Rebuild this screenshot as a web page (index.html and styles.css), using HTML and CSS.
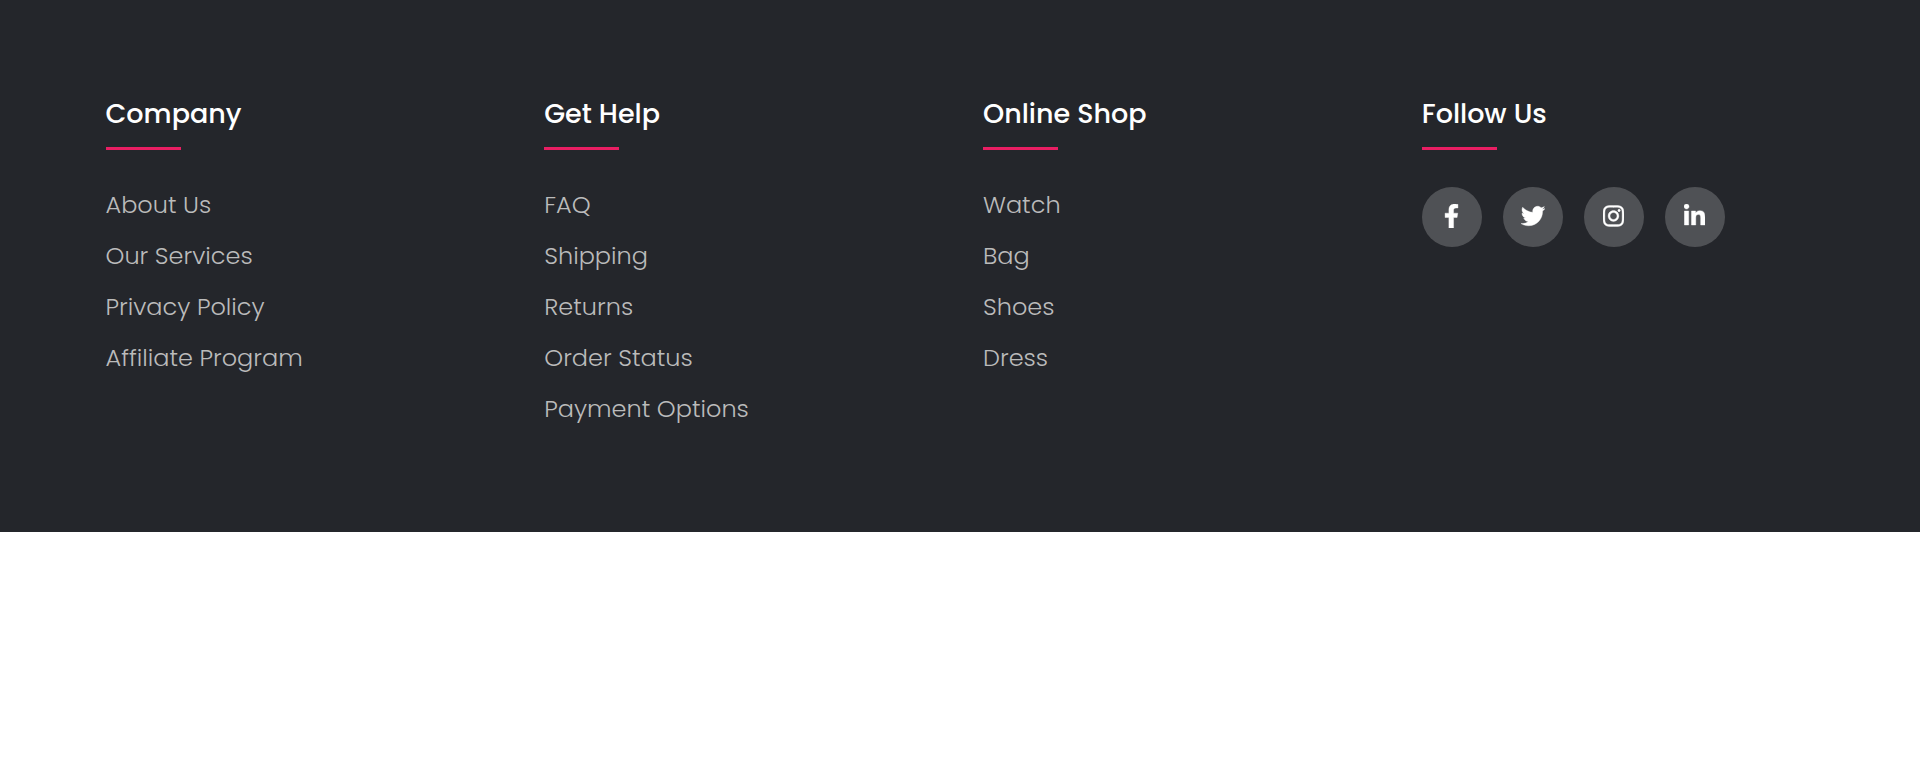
FILE: index.html
```html
<!DOCTYPE html>
<html lang="en">
<head>
<meta charset="utf-8">
<meta name="viewport" content="width=device-width, initial-scale=1">
<title>Footer</title>
<link rel="stylesheet" href="styles.css">
</head>
<body>
<footer class="footer">
  <div class="container">
    <section class="footer-col">
      <h4 class="footer-title">Company</h4>
      <ul class="footer-links">
        <li><a href="#">About Us</a></li>
        <li><a href="#">Our Services</a></li>
        <li><a href="#">Privacy Policy</a></li>
        <li><a href="#">Affiliate Program</a></li>
      </ul>
    </section>
    <section class="footer-col">
      <h4 class="footer-title">Get Help</h4>
      <ul class="footer-links">
        <li><a href="#">FAQ</a></li>
        <li><a href="#">Shipping</a></li>
        <li><a href="#">Returns</a></li>
        <li><a href="#">Order Status</a></li>
        <li><a href="#">Payment Options</a></li>
      </ul>
    </section>
    <section class="footer-col">
      <h4 class="footer-title">Online Shop</h4>
      <ul class="footer-links">
        <li><a href="#">Watch</a></li>
        <li><a href="#">Bag</a></li>
        <li><a href="#">Shoes</a></li>
        <li><a href="#">Dress</a></li>
      </ul>
    </section>
    <section class="footer-col">
      <h4 class="footer-title">Follow Us</h4>
      <div class="social-links">
        <a href="#" aria-label="Facebook"><svg viewBox="0 0 320 512" aria-hidden="true"><path d="M279.14 288l14.22-92.66h-88.91v-60.13c0-25.35 12.42-50.06 52.24-50.06h40.42V6.26S260.43 0 225.36 0c-73.22 0-121.08 44.38-121.08 124.72v70.62H22.89V288h81.39v224h100.17V288z"/></svg></a>
        <a href="#" aria-label="Twitter"><svg viewBox="0 0 512 512" aria-hidden="true"><path d="M459.37 151.716c.325 4.548.325 9.097.325 13.645 0 138.72-105.583 298.558-298.558 298.558-59.452 0-114.68-17.219-161.137-47.106 8.447.974 16.568 1.299 25.34 1.299 49.055 0 94.213-16.568 130.274-44.832-46.132-.975-84.792-31.188-98.112-72.772 6.498.974 12.995 1.624 19.818 1.624 9.421 0 18.843-1.3 27.614-3.573-48.081-9.747-84.143-51.98-84.143-102.985v-1.299c13.969 7.797 30.214 12.67 47.431 13.319-28.264-18.843-46.781-51.005-46.781-87.391 0-19.492 5.197-37.36 14.294-52.954 51.655 63.675 129.3 105.258 216.365 109.807-1.624-7.797-2.599-15.918-2.599-24.04 0-57.828 46.782-104.934 104.934-104.934 30.213 0 57.502 12.67 76.67 33.137 23.715-4.548 46.456-13.32 66.599-25.34-7.798 24.366-24.366 44.833-46.132 57.827 21.117-2.273 41.584-8.122 60.426-16.243-14.292 20.791-32.161 39.308-52.628 54.253z"/></svg></a>
        <a href="#" aria-label="Instagram"><svg viewBox="0 0 448 512" aria-hidden="true"><path d="M224.1 141c-63.6 0-114.9 51.3-114.9 114.9s51.3 114.9 114.9 114.9S339 319.5 339 255.9 287.7 141 224.1 141zm0 189.6c-41.1 0-74.7-33.5-74.7-74.7s33.5-74.7 74.7-74.7 74.7 33.5 74.7 74.7-33.6 74.7-74.7 74.7zm146.4-194.3c0 14.9-12 26.8-26.8 26.8-14.9 0-26.8-12-26.8-26.8s12-26.8 26.8-26.8 26.8 12 26.8 26.8zm76.1 27.2c-1.7-35.9-9.9-67.7-36.2-93.9-26.2-26.2-58-34.4-93.9-36.2-37-2.1-147.9-2.1-184.9 0-35.8 1.7-67.6 9.9-93.9 36.1s-34.4 58-36.2 93.9c-2.1 37-2.1 147.9 0 184.9 1.7 35.9 9.9 67.7 36.2 93.9s58 34.4 93.9 36.2c37 2.1 147.9 2.1 184.9 0 35.9-1.7 67.7-9.9 93.9-36.2 26.2-26.2 34.4-58 36.2-93.9 2.1-37 2.1-147.8 0-184.8zM398.8 388c-7.8 19.6-22.9 34.7-42.6 42.6-29.5 11.7-99.5 9-132.1 9s-102.7 2.6-132.1-9c-19.6-7.8-34.7-22.9-42.6-42.6-11.7-29.5-9-99.5-9-132.1s-2.6-102.7 9-132.1c7.8-19.6 22.9-34.7 42.6-42.6 29.5-11.7 99.5-9 132.1-9s102.7-2.6 132.1 9c19.6 7.8 34.7 22.9 42.6 42.6 11.7 29.5 9 99.5 9 132.1s2.7 102.7-9 132.1z"/></svg></a>
        <a href="#" aria-label="LinkedIn"><svg viewBox="0 0 448 512" aria-hidden="true"><path d="M100.28 448H7.4V148.9h92.88zM53.79 108.1C24.09 108.1 0 83.5 0 53.8a53.79 53.79 0 0 1 107.58 0c0 29.7-24.1 54.3-53.79 54.3zM447.9 448h-92.68V302.4c0-34.7-.7-79.2-48.29-79.2-48.29 0-55.69 37.7-55.69 76.7V448h-92.78V148.9h89.08v40.8h1.3c12.4-23.5 42.69-48.3 87.88-48.3 94 0 111.28 61.9 111.28 142.3V448z"/></svg></a>
      </div>
    </section>
  </div>
</footer>
</body>
</html>
```
FILE: styles.css
```css
* {
  box-sizing: border-box;
  margin: 0;
  padding: 0;
}

body {
  background: #ffffff;
  font-family: Poppins, Inter, sans-serif;
}

.footer {
  padding: 94px 0 105px;
  background: #24262b;
}

.container {
  display: grid;
  grid-template-columns: repeat(4, 1fr);
  max-width: 1755px;
  margin: 0 auto;
}

.footer-col {
  padding-left: 23px;
  padding-right: 22px;
}

.footer-title {
  position: relative;
  margin-bottom: 53px;
  color: #ffffff;
  font-size: 27px;
  font-weight: 500;
  line-height: 40px;
}

.footer-title::after {
  content: "";
  position: absolute;
  left: 0;
  bottom: -16px;
  width: 75px;
  height: 3px;
  background: #e91e63;
}

.footer-links {
  display: grid;
  gap: 15px;
  list-style: none;
}

.footer-links a {
  display: block;
  color: #bbbbbb;
  font-size: 24px;
  font-weight: 300;
  line-height: 36px;
  text-decoration: none;
}

.social-links {
  display: flex;
  flex-wrap: wrap;
  gap: 21px;
}

.social-links a {
  display: flex;
  align-items: center;
  justify-content: center;
  width: 60px;
  height: 60px;
  padding-bottom: 2px;
  border-radius: 50%;
  background: rgba(255, 255, 255, 0.2);
}

.social-links svg {
  height: 24px;
  fill: #ffffff;
  stroke: #ffffff;
  stroke-width: 8;
}

@media (max-width: 900px) {
  .container {
    grid-template-columns: repeat(2, 1fr);
    row-gap: 45px;
  }
}
```
